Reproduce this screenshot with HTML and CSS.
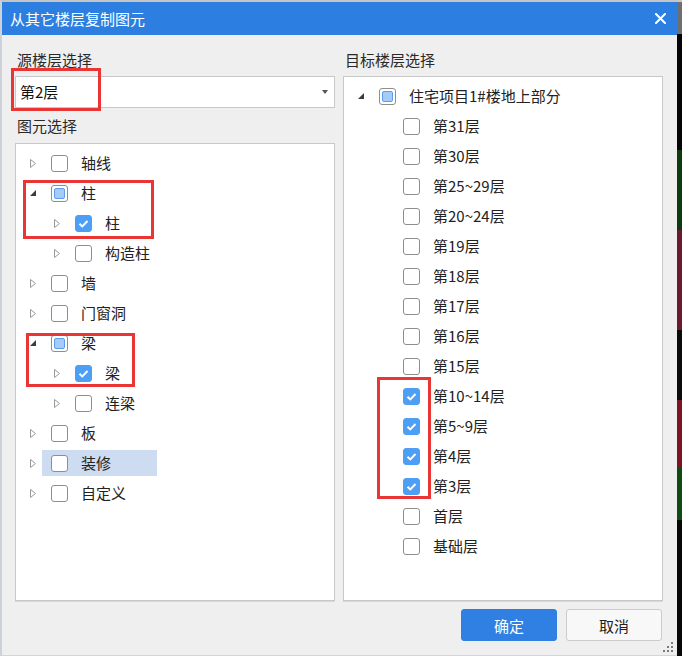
FILE: index.html
```html
<!DOCTYPE html>
<html lang="zh-CN">
<head>
<meta charset="utf-8">
<title>从其它楼层复制图元</title>
<link rel="stylesheet" href="styles.css">
</head>
<body>
<div class="screen">
  <div class="dialog">
    <div class="titlebar">
      <span class="title">从其它楼层复制图元</span>
      <svg class="close" width="11" height="11" viewBox="0 0 11 11"><path d="M1 1L10 10M10 1L1 10" stroke="#fff" stroke-width="2" stroke-linecap="square"/></svg>
    </div>
    <div class="body">
      <div class="cols">
        <div class="col">
          <div class="label">源楼层选择</div>
          <div class="select"><span class="sel-text">第2层</span><span class="arrow"></span></div>
          <div class="label second">图元选择</div>
          <div class="panel">
            <div class="row"><span class="exp"><svg width="6" height="9" viewBox="0 0 6 9"><path d="M0.5 0.5L5.5 4.5L0.5 8.5Z" fill="none" stroke="#9a9a9a"/></svg></span><span class="node"><span class="cb"></span><span class="txt">轴线</span></span></div>
            <div class="row"><span class="exp"><svg width="6" height="6" viewBox="0 0 6 6"><path d="M6 0L6 6L0 6Z" fill="#3c3c3c"/></svg></span><span class="node"><span class="cb part"></span><span class="txt">柱</span></span></div>
            <div class="row l1"><span class="exp"><svg width="6" height="9" viewBox="0 0 6 9"><path d="M0.5 0.5L5.5 4.5L0.5 8.5Z" fill="none" stroke="#9a9a9a"/></svg></span><span class="node"><span class="cb on"><svg width="17" height="17" viewBox="0 0 17 17"><path d="M4.5 8.8L7.3 11.4L12.5 6" fill="none" stroke="#fff" stroke-width="2"/></svg></span><span class="txt">柱</span></span></div>
            <div class="row l1"><span class="exp"><svg width="6" height="9" viewBox="0 0 6 9"><path d="M0.5 0.5L5.5 4.5L0.5 8.5Z" fill="none" stroke="#9a9a9a"/></svg></span><span class="node"><span class="cb"></span><span class="txt">构造柱</span></span></div>
            <div class="row"><span class="exp"><svg width="6" height="9" viewBox="0 0 6 9"><path d="M0.5 0.5L5.5 4.5L0.5 8.5Z" fill="none" stroke="#9a9a9a"/></svg></span><span class="node"><span class="cb"></span><span class="txt">墙</span></span></div>
            <div class="row"><span class="exp"><svg width="6" height="9" viewBox="0 0 6 9"><path d="M0.5 0.5L5.5 4.5L0.5 8.5Z" fill="none" stroke="#9a9a9a"/></svg></span><span class="node"><span class="cb"></span><span class="txt">门窗洞</span></span></div>
            <div class="row"><span class="exp"><svg width="6" height="6" viewBox="0 0 6 6"><path d="M6 0L6 6L0 6Z" fill="#3c3c3c"/></svg></span><span class="node"><span class="cb part"></span><span class="txt">梁</span></span></div>
            <div class="row l1"><span class="exp"><svg width="6" height="9" viewBox="0 0 6 9"><path d="M0.5 0.5L5.5 4.5L0.5 8.5Z" fill="none" stroke="#9a9a9a"/></svg></span><span class="node"><span class="cb on"><svg width="17" height="17" viewBox="0 0 17 17"><path d="M4.5 8.8L7.3 11.4L12.5 6" fill="none" stroke="#fff" stroke-width="2"/></svg></span><span class="txt">梁</span></span></div>
            <div class="row l1"><span class="exp"><svg width="6" height="9" viewBox="0 0 6 9"><path d="M0.5 0.5L5.5 4.5L0.5 8.5Z" fill="none" stroke="#9a9a9a"/></svg></span><span class="node"><span class="cb"></span><span class="txt">连梁</span></span></div>
            <div class="row"><span class="exp"><svg width="6" height="9" viewBox="0 0 6 9"><path d="M0.5 0.5L5.5 4.5L0.5 8.5Z" fill="none" stroke="#9a9a9a"/></svg></span><span class="node"><span class="cb"></span><span class="txt">板</span></span></div>
            <div class="row"><span class="exp"><svg width="6" height="9" viewBox="0 0 6 9"><path d="M0.5 0.5L5.5 4.5L0.5 8.5Z" fill="none" stroke="#9a9a9a"/></svg></span><span class="node sel"><span class="cb"></span><span class="txt">装修</span></span></div>
            <div class="row"><span class="exp"><svg width="6" height="9" viewBox="0 0 6 9"><path d="M0.5 0.5L5.5 4.5L0.5 8.5Z" fill="none" stroke="#9a9a9a"/></svg></span><span class="node"><span class="cb"></span><span class="txt">自定义</span></span></div>
          </div>
        </div>
        <div class="col">
          <div class="label">目标楼层选择</div>
          <div class="panel">
            <div class="row"><span class="exp"><svg width="6" height="6" viewBox="0 0 6 6"><path d="M6 0L6 6L0 6Z" fill="#3c3c3c"/></svg></span><span class="node"><span class="cb part"></span><span class="txt">住宅项目1#楼地上部分</span></span></div>
            <div class="row l1"><span class="exp"></span><span class="node"><span class="cb"></span><span class="txt">第31层</span></span></div>
            <div class="row l1"><span class="exp"></span><span class="node"><span class="cb"></span><span class="txt">第30层</span></span></div>
            <div class="row l1"><span class="exp"></span><span class="node"><span class="cb"></span><span class="txt">第25~29层</span></span></div>
            <div class="row l1"><span class="exp"></span><span class="node"><span class="cb"></span><span class="txt">第20~24层</span></span></div>
            <div class="row l1"><span class="exp"></span><span class="node"><span class="cb"></span><span class="txt">第19层</span></span></div>
            <div class="row l1"><span class="exp"></span><span class="node"><span class="cb"></span><span class="txt">第18层</span></span></div>
            <div class="row l1"><span class="exp"></span><span class="node"><span class="cb"></span><span class="txt">第17层</span></span></div>
            <div class="row l1"><span class="exp"></span><span class="node"><span class="cb"></span><span class="txt">第16层</span></span></div>
            <div class="row l1"><span class="exp"></span><span class="node"><span class="cb"></span><span class="txt">第15层</span></span></div>
            <div class="row l1"><span class="exp"></span><span class="node"><span class="cb on"><svg width="17" height="17" viewBox="0 0 17 17"><path d="M4.5 8.8L7.3 11.4L12.5 6" fill="none" stroke="#fff" stroke-width="2"/></svg></span><span class="txt">第10~14层</span></span></div>
            <div class="row l1"><span class="exp"></span><span class="node"><span class="cb on"><svg width="17" height="17" viewBox="0 0 17 17"><path d="M4.5 8.8L7.3 11.4L12.5 6" fill="none" stroke="#fff" stroke-width="2"/></svg></span><span class="txt">第5~9层</span></span></div>
            <div class="row l1"><span class="exp"></span><span class="node"><span class="cb on"><svg width="17" height="17" viewBox="0 0 17 17"><path d="M4.5 8.8L7.3 11.4L12.5 6" fill="none" stroke="#fff" stroke-width="2"/></svg></span><span class="txt">第4层</span></span></div>
            <div class="row l1"><span class="exp"></span><span class="node"><span class="cb on"><svg width="17" height="17" viewBox="0 0 17 17"><path d="M4.5 8.8L7.3 11.4L12.5 6" fill="none" stroke="#fff" stroke-width="2"/></svg></span><span class="txt">第3层</span></span></div>
            <div class="row l1"><span class="exp"></span><span class="node"><span class="cb"></span><span class="txt">首层</span></span></div>
            <div class="row l1"><span class="exp"></span><span class="node"><span class="cb"></span><span class="txt">基础层</span></span></div>
          </div>
        </div>
      </div>
      <div class="footer">
        <button class="btn primary">确定</button>
        <button class="btn cancel">取消</button>
      </div>
    </div>
  </div>
  <div class="side"></div>
  <svg class="grip" width="10" height="10" viewBox="0 0 10 10"><g fill="#7a7a7a"><rect x="8" y="0" width="2" height="2"/><rect x="4" y="4" width="2" height="2"/><rect x="8" y="4" width="2" height="2"/><rect x="0" y="8" width="2" height="2"/><rect x="4" y="8" width="2" height="2"/><rect x="8" y="8" width="2" height="2"/></g></svg>
  <div class="mark m1"></div>
  <div class="mark m2"></div>
  <div class="mark m3"></div>
  <div class="mark m4"></div>
</div>
</body>
</html>
```
FILE: styles.css
```css
html, body {
  margin: 0;
  padding: 0;
}
body {
  font-family: "Noto Sans CJK SC", "Noto Sans", sans-serif;
  font-size: 15px;
  color: #222;
}
.screen {
  position: relative;
  display: flex;
  width: 682px;
  height: 656px;
  overflow: hidden;
}
.dialog {
  width: 677px;
  height: 656px;
  box-sizing: border-box;
  border-top: 2px solid #c4c4c4;
  border-left: 2px solid #ccd1da;
  border-bottom: 1px solid #d3d5d9;
  background: #efefef;
  display: flex;
  flex-direction: column;
  flex: none;
}
.titlebar {
  height: 33px;
  flex: none;
  background: #2c7fe0;
  color: #fff;
  display: flex;
  align-items: center;
  justify-content: space-between;
  padding: 0 11px 0 8px;
}
.title {
  line-height: 20px;
  font-size: 15px;
}
.close {
  display: block;
}
.body {
  flex: 1;
  padding: 15px 14px 14px 13px;
  display: flex;
  flex-direction: column;
}
.cols {
  display: grid;
  grid-template-columns: 320px 320px;
  column-gap: 8px;
  height: 551px;
}
.col {
  display: flex;
  flex-direction: column;
  min-height: 0;
}
.label {
  height: 20px;
  line-height: 20px;
  padding-left: 2px;
  margin-bottom: 6px;
  color: #2a2a2a;
}
.label.second {
  margin-top: 8px;
  margin-bottom: 7px;
}
.select {
  height: 32px;
  box-sizing: border-box;
  border: 1px solid #c8c8c8;
  background: #fff;
  display: flex;
  align-items: center;
  justify-content: space-between;
  padding: 0 6px 0 4px;
  color: #111;
}
.sel-text {
  line-height: 20px;
}
.arrow {
  width: 0;
  height: 0;
  border-left: 3px solid transparent;
  border-right: 3px solid transparent;
  border-top: 4px solid #555;
}
.panel {
  flex: 1;
  background: #fff;
  border: 1px solid #c8c8c8;
  box-shadow: 0 1px 0 #d6d8dc;
  padding-top: 4px;
  box-sizing: border-box;
  overflow: hidden;
}
.row {
  height: 30px;
  display: flex;
  align-items: center;
  padding-left: 12px;
}
.row.l1 {
  padding-left: 36px;
}
.exp {
  width: 14px;
  height: 30px;
  flex: none;
  display: flex;
  align-items: center;
  padding-left: 2px;
  box-sizing: border-box;
}
.exp svg {
  display: block;
}
.node {
  display: flex;
  align-items: center;
  height: 26px;
  padding-left: 9px;
  box-sizing: border-box;
}
.node.sel {
  background: #cddcf0;
  width: 115px;
}
.cb {
  width: 17px;
  height: 17px;
  box-sizing: border-box;
  border: 1px solid #8e8e8e;
  border-radius: 3px;
  background: #fff;
  margin-right: 13px;
  position: relative;
  flex: none;
}
.cb svg {
  position: absolute;
  left: -1px;
  top: -1px;
  display: block;
}
.cb.on {
  background: #4d9ff5;
  border-color: #4d9ff5;
}
.cb.part::after {
  content: "";
  position: absolute;
  left: 2px;
  top: 2px;
  width: 11px;
  height: 11px;
  box-sizing: border-box;
  background: #a5cbf8;
  border: 1px solid #5b9ef0;
  border-radius: 2px;
}
.txt {
  line-height: 20px;
  color: #222;
  white-space: nowrap;
}
.footer {
  display: flex;
  justify-content: flex-end;
  gap: 9px;
  margin-top: 8px;
  padding-right: 1px;
}
.btn {
  width: 96px;
  height: 32px;
  box-sizing: border-box;
  border-radius: 3px;
  font-family: inherit;
  font-size: 15px;
  display: flex;
  align-items: center;
  justify-content: center;
  padding: 0;
}
.btn.primary {
  background: #2f80e2;
  border: 1px solid #2f80e2;
  color: #fff;
}
.btn.cancel {
  background: #f8f8f8;
  border: 1px solid #cbcbcb;
  color: #222;
}
.side {
  flex: 1;
  background: linear-gradient(to bottom,
    #c8c8c8 0, #c8c8c8 2px,
    #6f6f6f 2px, #6f6f6f 34px,
    #050505 34px, #050505 150px,
    #0d3a0f 150px, #0d3a0f 230px,
    #6a1a2e 230px, #6a1a2e 330px,
    #0b0b0b 330px, #0b0b0b 400px,
    #7a1424 400px, #7a1424 468px,
    #0e4a12 468px, #0e4a12 520px,
    #070707 520px);
}
.grip {
  position: absolute;
  left: 663px;
  top: 642px;
}
.mark {
  position: absolute;
  border: 3px solid #ea3535;
  box-sizing: border-box;
}
.m1 { left: 11px; top: 68px; width: 90px; height: 43px; }
.m2 { left: 23px; top: 180px; width: 131px; height: 59px; }
.m3 { left: 26px; top: 333px; width: 109px; height: 54px; }
.m4 { left: 377px; top: 377px; width: 54px; height: 122px; }
```
